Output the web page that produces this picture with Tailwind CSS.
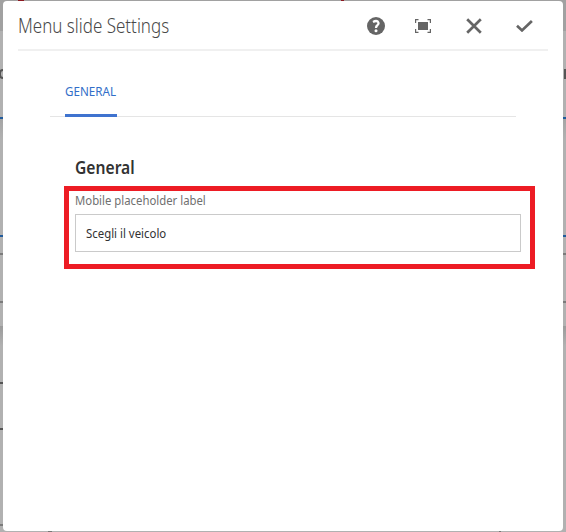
<!DOCTYPE html>
<html lang="en">
<head>
<meta charset="utf-8">
<title>Menu slide Settings</title>
<script src="https://cdn.jsdelivr.net/npm/@tailwindcss/browser@4"></script>
</head>
<body class="relative h-[532px] w-[566px] overflow-hidden bg-[#b1b1b1] px-[3px] py-px font-['Noto_Sans','Open_Sans',sans-serif]">
<!-- dimmed page behind the dialog -->
<div class="absolute inset-0" aria-hidden="true">
  <div class="absolute top-0 left-0 h-[31px] w-full bg-[#a1a1a1]"></div>
  <div class="absolute top-0 left-[18px] h-px w-[6px] bg-[#8c1820]"></div>
  <div class="absolute top-0 left-[341px] h-px w-[3px] bg-[#8c1820]"></div>
  <div class="absolute top-[69px] left-[-1px] h-[10px] w-[8px] rounded-full border-2 border-[#555]"></div>
  <div class="absolute top-[69px] left-[564px] h-[10px] w-[2px] bg-[#555]"></div>
  <div class="absolute top-[117px] left-0 h-[2px] w-full bg-[#215b9c]"></div>
  <div class="absolute top-[119px] left-0 h-[20px] w-full bg-linear-to-b from-[#a5a5a5] to-[#b1b1b1]"></div>
  <div class="absolute top-[235px] left-0 h-[2px] w-full bg-[#215b9c]"></div>
  <div class="absolute top-[253px] left-0 h-[2px] w-full bg-[#7b7b7b]"></div>
  <div class="absolute top-[301px] left-0 h-[2px] w-full bg-[#7b7b7b]"></div>
  <div class="absolute top-[326px] left-0 h-[20px] w-full bg-linear-to-b from-[#9b9b9b] to-[#b1b1b1]"></div>
  <div class="absolute top-[382px] left-0 h-[2px] w-[10px] bg-[#555]"></div>
  <div class="absolute top-[428px] left-0 h-[2px] w-[10px] bg-[#555]"></div>
  <div class="absolute top-[524px] left-0 h-[2px] w-[10px] bg-[#7b7b7b]"></div>
  <div class="absolute top-[531px] left-[48px] h-px w-[4px] bg-[#777]"></div>
  <div class="absolute top-[531px] left-[499px] h-px w-[2px] bg-[#777]"></div>
</div>
<main class="relative h-[530px] w-[560px] rounded-[4px] bg-white">
  <header class="mx-[15px] flex h-[50px] w-[530px] items-center justify-between border-b-2 border-[#f0f0f0]">
    <h1 class="w-[152px] origin-left scale-x-[0.871] pt-px text-[19.5px] font-light whitespace-nowrap text-[#484848]">Menu slide Settings</h1>
    <div class="mr-[15px] flex h-[18px] items-center pt-px text-[#656565]">
      <svg class="h-[18px] w-[18px]" viewBox="0 0 18 18"><circle cx="9" cy="9" r="9" fill="currentColor"/><path d="M6 4.9Q9 3.3 10.7 4.5Q12.5 6.5 10.4 8.2Q9 9.2 9 10.9" fill="none" stroke="#fff" stroke-width="2.3"/><circle cx="9" cy="13.8" r="1.5" fill="#fff"/></svg>
      <svg class="ml-[30px] h-[14px] w-[16px]" viewBox="0 0 16 14" fill="none" stroke="currentColor" stroke-width="1.2"><path d="M.6 4V.6H3.5M12.5 .6H15.4V4M15.4 10V13.4H12.5M3.5 13.4H.6V10"/><path d="M3 3H13V11H3Z" fill="currentColor" stroke="none"/></svg>
      <svg class="ml-[35px] h-[16px] w-[16px]" viewBox="0 0 16 16"><path d="M1.2 1.2L14.8 14.8M14.8 1.2L1.2 14.8" stroke="currentColor" stroke-width="2.7"/></svg>
      <svg class="ml-[34px] h-[12px] w-[17px]" viewBox="0 0 17 12"><path d="M1 5.8L6 10.4L15.9 1" fill="none" stroke="currentColor" stroke-width="2.7"/></svg>
    </div>
  </header>
  <nav class="mt-[22px] ml-[47px] flex h-[44px] w-[466px] border-b border-[#e5e5e5] pl-[15px]">
    <div class="h-[44px] w-[52px] border-b-3 border-[#3f73cf] pt-[10px] text-[12px] leading-[18px] text-[#326ec8]"><span class="inline-block origin-left scale-x-[0.97] whitespace-nowrap">GENERAL</span></div>
  </nav>
  <section class="mt-[38px] ml-[72px] w-[446px]">
    <h2 class="h-[24px] origin-left scale-x-[0.92] text-[17px] leading-[25px] font-semibold text-[#323232]">General</h2>
    <label class="mt-[13px] block h-[18px] text-[12px] leading-[18px] text-[#707070]"><span class="inline-block origin-left scale-x-[0.945] whitespace-nowrap">Mobile placeholder label</span></label>
    <div class="mt-[4px] flex h-[38px] items-center border border-[#cacaca] pt-px pl-[10px] text-[12px] text-[#323232]"><span class="inline-block origin-left scale-x-[0.95] whitespace-nowrap">Scegli il veicolo</span></div>
  </section>
  <div class="absolute top-[185px] left-[61px] h-[83px] w-[471px] border-5 border-[#ed1c24]"></div>
</main>
</body>
</html>
